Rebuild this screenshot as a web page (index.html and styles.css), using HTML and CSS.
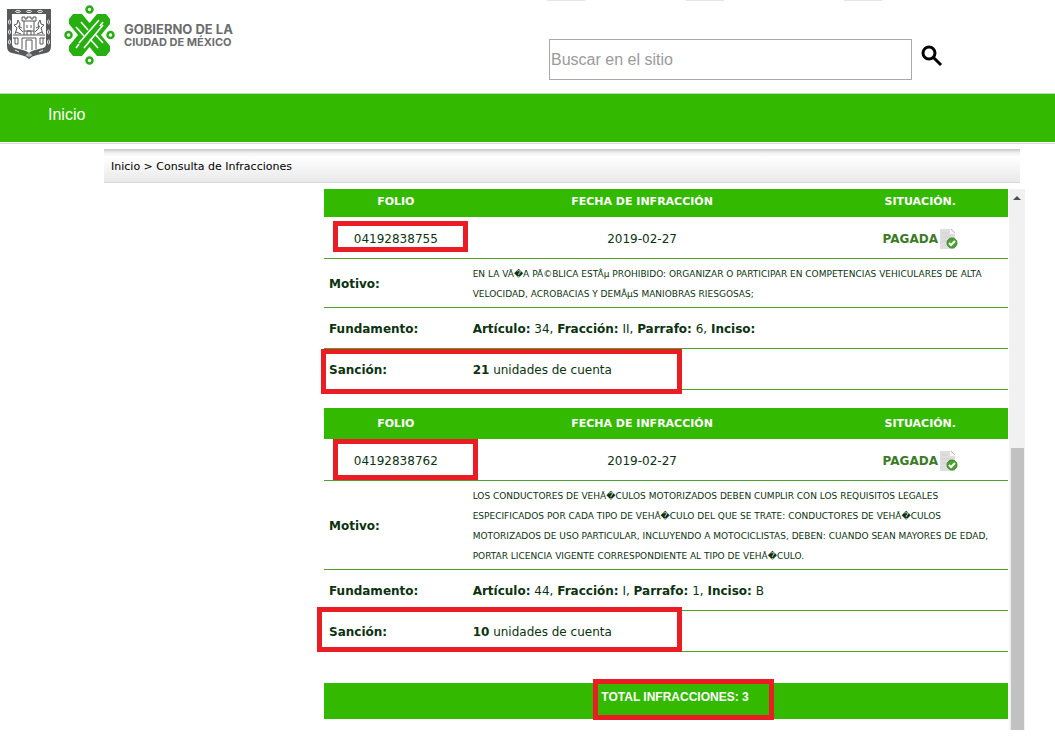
FILE: index.html
```html
<!DOCTYPE html>
<html lang="es">
<head>
  <meta charset="UTF-8">
  <meta name="viewport" content="width=device-width, initial-scale=1.0">
  <title>Consulta de Infracciones</title>
  <link rel="stylesheet" href="styles.css">
</head>
<body>

  <header class="site-header">
    <div class="top-strip"><span></span><span></span><span></span></div>
    <div class="header-row">
      <div class="brand">
        <!-- Escudo -->
        <svg class="shield" viewBox="0 0 46 52" aria-hidden="true">
          <path d="M1 1H45V38Q45 44 40 45L31 47Q26 48 23 51Q20 48 15 47L6 45Q1 44 1 38Z" fill="#58595b"/>
          <path d="M6 6H40V36Q40 39 37 40L29 42Q25 43 23 45Q21 43 17 42L9 40Q6 39 6 36Z" fill="#fff"/>
          <g fill="none" stroke="#eee" stroke-width="1">
            <ellipse cx="12" cy="3.5" rx="2.5" ry="1"/><ellipse cx="23" cy="3.5" rx="2.5" ry="1"/><ellipse cx="34" cy="3.5" rx="2.5" ry="1"/>
            <ellipse cx="3.5" cy="14" rx="1" ry="2"/><ellipse cx="3.5" cy="24" rx="1" ry="2"/><ellipse cx="3.5" cy="34" rx="1" ry="2"/>
            <ellipse cx="42.5" cy="14" rx="1" ry="2"/><ellipse cx="42.5" cy="24" rx="1" ry="2"/><ellipse cx="42.5" cy="34" rx="1" ry="2"/>
            <path d="M9 42L13 44M33 44L37 42"/><ellipse cx="23" cy="47" rx="2.5" ry="1"/>
          </g>
          <g fill="none" stroke="#58595b" stroke-width="1">
            <path d="M18 27V13H16V9H19V11H21V9H25V11H27V9H30V13H28V27M18 13H28M21 17V20M25 17V20M18 23H28M21 27V23H25V27"/>
            <path d="M7 27H39M7 30H12V36H9V30M16 41V30H30V41M34 36V30H39M34 36H37V30M20 42V32H26V42"/>
            <path d="M9 26L11 20L8 17L11 16L12 12L14 16L13 20L17 24M10 24L15 26M12 18L16 20M37 26L35 20L38 17L35 16L34 12L32 16L33 20L29 24M36 24L31 26M34 18L30 20"/>
          </g>
        </svg>
        <svg class="emblem" viewBox="0 0 52 60" aria-hidden="true">
          <g fill="none" stroke="#26b010" stroke-width="2.5">
            <circle cx="25.5" cy="4.5" r="3"/><circle cx="25.5" cy="55.5" r="3"/>
            <circle cx="4.5" cy="30" r="3"/><circle cx="46.500" cy="30" r="3"/>
          </g>
          <path fill="#26b010" d="M5 14L9 9H18L25.500 18L33 9H42L46 14V19L37 30L46 41V46L42 51H33L25.500 42L18 51H9L5 46V41L14 30L5 19Z"/>
          <g fill="none" stroke="#fff" stroke-width="1.6">
            <path d="M15 38L35 15M20 43L39 20"/>
            <path d="M17 17L24 25M12 22L20 31M31 29L39 38M26 34L34 43"/>
            <path d="M12 43L15 39M39 17L36 21"/>
          </g>
        </svg>
        <div class="brand-name"><span class="brand-top">GOBIERNO DE LA</span><span>CIUDAD DE MÉXICO</span></div>
      </div>
      <form class="search">
        <input type="search" placeholder="Buscar en el sitio" aria-label="Buscar en el sitio">
        <button type="button" aria-label="Buscar">
          <svg viewBox="0 0 22 22"><circle cx="8" cy="8" r="6" fill="none" stroke="#000" stroke-width="3"/><path d="M12.5 12.5L20 20" stroke="#000" stroke-width="3"/></svg>
        </button>
      </form>
    </div>
  </header>

  <nav class="main-nav"><a href="#">Inicio</a></nav>

  <div class="breadcrumb">Inicio &gt; Consulta de Infracciones</div>

  <main class="results">
    <div class="results-list">
      <table class="ticket first">
        <colgroup><col class="col-folio"><col class="col-date"><col class="col-state"></colgroup>
        <tr><th>FOLIO</th><th>FECHA DE INFRACCIÓN</th><th class="state">SITUACIÓN.</th></tr>
        <tr class="summary">
          <td><span class="mark mark-folio"></span>04192838755</td>
          <td>2019-02-27</td>
          <td class="state"><div class="paid">PAGADA
            <svg viewBox="0 0 18 20"><path d="M0 0H10L15 5V20H0Z" fill="#dedee0"/><path d="M10 0L15 5H10Z" fill="#f6f6f6"/><path d="M11 0L15 4" stroke="#bbb"/><path d="M2 4H8M2 8H11M2 12H7" stroke="#d0d0d2"/><circle cx="12" cy="14" r="5" fill="#4da32f" stroke="#3b8426"/><path d="M9 14L11 16L15 12" fill="none" stroke="#fff" stroke-width="2"/></svg></div></td>
        </tr>
        <tr><td class="label">Motivo:</td><td class="reason" colspan="2">EN LA VÃ�A PÃ©BLICA ESTÂµ PROHIBIDO: ORGANIZAR O PARTICIPAR EN COMPETENCIAS VEHICULARES DE ALTA<br>VELOCIDAD, ACROBACIAS Y DEMÂµS MANIOBRAS RIESGOSAS;</td></tr>
        <tr><td class="label">Fundamento:</td><td colspan="2"><b>Artículo:</b> 34, <b>Fracción:</b> II, <b>Parrafo:</b> 6, <b>Inciso:</b></td></tr>
        <tr><td class="label"><span class="mark mark-fine"></span>Sanción:</td><td colspan="2"><b>21</b> unidades de cuenta</td></tr>
      </table>

      <table class="ticket">
        <colgroup><col class="col-folio"><col class="col-date"><col class="col-state"></colgroup>
        <tr><th>FOLIO</th><th>FECHA DE INFRACCIÓN</th><th class="state">SITUACIÓN.</th></tr>
        <tr class="summary">
          <td><span class="mark mark-folio-tall"></span>04192838762</td>
          <td>2019-02-27</td>
          <td class="state"><div class="paid">PAGADA
            <svg viewBox="0 0 18 20"><path d="M0 0H10L15 5V20H0Z" fill="#dedee0"/><path d="M10 0L15 5H10Z" fill="#f6f6f6"/><path d="M11 0L15 4" stroke="#bbb"/><path d="M2 4H8M2 8H11M2 12H7" stroke="#d0d0d2"/><circle cx="12" cy="14" r="5" fill="#4da32f" stroke="#3b8426"/><path d="M9 14L11 16L15 12" fill="none" stroke="#fff" stroke-width="2"/></svg></div></td>
        </tr>
        <tr><td class="label">Motivo:</td><td class="reason" colspan="2">LOS CONDUCTORES DE VEHÃ�CULOS MOTORIZADOS DEBEN CUMPLIR CON LOS REQUISITOS LEGALES<br>ESPECIFICADOS POR CADA TIPO DE VEHÃ�CULO DEL QUE SE TRATE: CONDUCTORES DE VEHÃ�CULOS<br>MOTORIZADOS DE USO PARTICULAR, INCLUYENDO A MOTOCICLISTAS, DEBEN: CUANDO SEAN MAYORES DE EDAD,<br>PORTAR LICENCIA VIGENTE CORRESPONDIENTE AL TIPO DE VEHÃ�CULO.</td></tr>
        <tr><td class="label">Fundamento:</td><td colspan="2"><b>Artículo:</b> 44, <b>Fracción:</b> I, <b>Parrafo:</b> 1, <b>Inciso:</b> B</td></tr>
        <tr><td class="label"><span class="mark mark-fine-wide"></span>Sanción:</td><td colspan="2"><b>10</b> unidades de cuenta</td></tr>
      </table>

      <div class="total"><span class="mark mark-total"></span>TOTAL INFRACCIONES: 3</div>
    </div>

    <div class="scrollbar">
      <span class="arrow"></span>
      <span class="thumb"></span>
    </div>
  </main>

</body>
</html>
```

FILE: styles.css
```css
* {
  box-sizing: border-box;
}
body {
  margin: 0;
  background-color: #fff;
  color: #0b3310;
  font-family: Verdana, "DejaVu Sans", sans-serif;
  font-size: 12px;
}

/* Header */
.site-header {
  height: 93px;
}
.top-strip {
  display: grid;
  grid-template-columns: 139px 158px 38px;
  padding-left: 547px;
}
.top-strip span {
  width: 38px;
  height: 1px;
  background-color: #e6e6e6;
}
.header-row {
  display: flex;
  justify-content: space-between;
  padding: 4px 112px 0 6px;
}
.brand {
  display: flex;
  align-items: flex-start;
}
.shield {
  width: 46px;
  height: 52px;
  margin-top: 3px;
}
.emblem {
  width: 52px;
  height: 60px;
  margin-left: 12px;
}
.brand-name {
  margin: 18px 0 0 8px;
  color: #6b6c6e;
  font: bold 11px/13px Inter, sans-serif;
}
.brand-name span {
  display: block;
}
.brand-name .brand-top {
  font-size: 13px;
}
.search {
  display: flex;
  align-items: flex-start;
  gap: 9px;
  padding-top: 34px;
}
.search input {
  width: 363px;
  height: 41px;
  padding: 1px;
  border: 1px solid #a9a9a9;
  border-radius: 0;
  font: 16px "Liberation Sans", Arial, sans-serif;
  appearance: none;
}
.search input::placeholder {
  color: #9a9a9a;
}
.search button {
  width: 22px;
  height: 22px;
  margin-top: 6px;
  padding: 0;
  border: none;
  background: none;
}
.search svg {
  display: block;
}

/* Navigation */
.main-nav {
  height: 51px;
  padding: 11px 48px;
  border-top: 1px solid #b9dcae;
  border-bottom: 1px solid #d2dccf;
  background: linear-gradient(#32b900, #32b900) 0 0 / 100% 48px no-repeat;
}
.main-nav a {
  color: #fff;
  font: 16px/20px "Liberation Sans", Arial, sans-serif;
  text-decoration: none;
}
.breadcrumb {
  margin: 5px 35px 0 104px;
  padding: 9px 7px 6px;
  border-bottom: 1px solid #d8d8d8;
  background: linear-gradient(#c8c8c8, #f2f2f2 4px, #fff 8px, #e9e9e9);
  color: #000;
  font-size: 11px;
  line-height: 18px;
}

/* Results */
.results {
  display: flex;
  gap: 1px;
  margin: 6px 30px 11px 324px;
}
.results-list {
  flex: 1;
}
.ticket {
  width: 100%;
  margin-bottom: 18px;
  table-layout: fixed;
  border-spacing: 0;
  line-height: 20px;
}
.col-folio {
  width: 21%;
}
.col-date {
  width: 51%;
}
.col-state {
  width: 28%;
}
.ticket th {
  padding: 6px 0 5px;
  background-color: #32b900;
  color: #fff;
  font-size: 11px;
}
.first th {
  padding-top: 3px;
}
.ticket td {
  position: relative;
  padding: 11px 5px 9px;
  border-bottom: 1px solid #4ba329;
}
.ticket .summary td {
  height: 42px;
  text-align: center;
}
.ticket .state {
  padding-left: 16px;
  padding-right: 0;
}
.ticket .label {
  font-weight: bold;
}
.ticket .reason {
  padding: 5px 0 3px 5px;
  font-size: 9px;
}
.paid {
  display: flex;
  align-items: center;
  justify-content: center;
  gap: 2px;
  color: #3c7a28;
  font-weight: bold;
}
.paid svg {
  width: 18px;
  height: 20px;
}
.total {
  position: relative;
  margin-top: 31px;
  padding: 4px 0 12px 18px;
  background-color: #32b900;
  color: #fff;
  font: bold 12px/20px "Liberation Sans", Arial, sans-serif;
  text-align: center;
}

/* Red frames over the important data */
.mark {
  position: absolute;
  border: 5px solid #ea1c24;
}
.mark-folio {
  left: 9px;
  top: 4px;
  width: 135px;
  height: 31px;
}
.mark-folio-tall {
  left: 9px;
  top: 0;
  width: 145px;
  height: 41px;
}
.mark-fine {
  left: -3px;
  top: 0;
  width: 361px;
  height: 45px;
  z-index: 1;
}
.mark-fine-wide {
  left: -7px;
  top: -4px;
  width: 365px;
  height: 45px;
  z-index: 1;
}
.mark-total {
  left: 269px;
  top: -4px;
  width: 181px;
  height: 41px;
}

/* Scrollbar */
.scrollbar {
  display: flex;
  flex-direction: column;
  align-items: center;
  justify-content: space-between;
  width: 16px;
  margin-bottom: -12px;
  padding-top: 7px;
  background-color: #f1f1f1;
}
.arrow {
  border: 4px solid transparent;
  border-top: none;
  border-bottom-color: #505050;
}
.thumb {
  width: 13px;
  height: 283px;
  background-color: #c1c1c1;
}
```
